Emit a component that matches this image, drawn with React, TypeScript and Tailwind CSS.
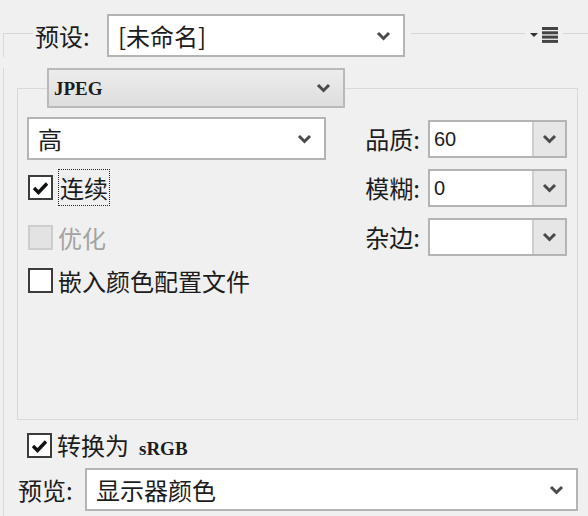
import type { ReactNode } from "react";

const LINE = "border-[#d9d9d9]";

function Chevron() {
  return (
    <svg width="15" height="10" viewBox="0 0 15 10" aria-hidden>
      <polyline
        points="2,2 7.5,7.5 13,2"
        fill="none"
        stroke="#4a4a4a"
        strokeWidth="3"
      />
    </svg>
  );
}

function MenuIcon() {
  return (
    <svg width="28" height="16" viewBox="0 0 28 16" aria-hidden>
      <polygon points="0,6 8,6 4,10" fill="#333" />
      {[0, 4.3, 8.6, 12.9].map((y) => (
        <rect key={y} x="12" y={y} width="16" height="3" fill="#444" />
      ))}
    </svg>
  );
}

function Select({
  children,
  className = "",
}: {
  children: ReactNode;
  className?: string;
}) {
  return (
    <div
      className={`flex items-center justify-between border-2 border-[#b4b4b4] bg-white pl-[9px] pr-[12px] ${className}`}
    >
      <span>{children}</span>
      <Chevron />
    </div>
  );
}

function Spin({ label, value }: { label: string; value: string }) {
  return (
    <div className="flex h-[38px] items-center">
      <span className="text-[24px] leading-none">{label}:</span>
      <div className="ml-[8px] flex h-full w-[139px] border-2 border-[#b4b4b4] bg-white">
        <span className="flex-1 self-center pl-[4px] font-['Liberation_Sans',sans-serif] text-[20px] leading-none">
          {value}
        </span>
        <div className="flex w-[33px] items-center justify-center border-l-2 border-[#cfcfcf] bg-[#e6e6e6]">
          <Chevron />
        </div>
      </div>
    </div>
  );
}

function Check({
  checked,
  disabled,
  children,
  className = "",
}: {
  checked?: boolean;
  disabled?: boolean;
  children: ReactNode;
  className?: string;
}) {
  return (
    <div className={`flex h-[25px] items-center ${className}`}>
      <span
        className={`flex size-[25px] shrink-0 items-center justify-center border-2 ${
          disabled
            ? "border-[#cdcdcd] bg-[#e3e3e3]"
            : "border-[#3c3c3c] bg-white"
        }`}
      >
        {checked && (
          <svg width="17" height="14" viewBox="0 0 17 14" aria-hidden>
            <polyline
              points="2,7 6.5,11.5 15,2.5"
              fill="none"
              stroke="#111"
              strokeWidth="3.4"
            />
          </svg>
        )}
      </span>
      <span
        className={`ml-[5px] text-[24px] leading-none ${
          disabled ? "text-[#a3a3a3]" : "text-[#1c1c1c]"
        }`}
      >
        {children}
      </span>
    </div>
  );
}

export default function App() {
  return (
    <div className="h-[516px] w-[588px] overflow-hidden bg-[#f0f0f0] pt-[14px] font-['Noto_Sans_CJK_SC',sans-serif] text-[#1c1c1c]">
      {/* preset header on the outer group line */}
      <div className="flex h-[43px]">
        <div className={`ml-[3px] mt-[19px] w-[30px] border-l border-t ${LINE}`} />
        <span className="ml-[2px] w-[72px] self-center text-[24px] leading-none">
          预设:
        </span>
        <Select className="w-[298px] text-[24px] leading-none">[未命名]</Select>
        <div className={`ml-[6px] mt-[19px] w-[114px] border-t ${LINE}`} />
        <div className="mx-[5px] flex items-center pb-[1px]">
          <MenuIcon />
        </div>
        <div className={`mt-[19px] flex-1 border-t ${LINE}`} />
      </div>

      <div className={`ml-[3px] h-[459px] border-l ${LINE}`}>
        {/* format group */}
        <div className="ml-[13px] mr-[10px] mt-[11px]">
          <div className="flex h-[40px]">
            <div className={`mt-[20px] w-[30px] border-l border-t ${LINE}`} />
            <div className="flex w-[298px] items-center justify-between border-2 border-[#b9b9b9] bg-gradient-to-b from-[#ececec] to-[#dedede] pl-[5px] pr-[12px]">
              <span className="font-['Liberation_Serif',serif] text-[19px] font-bold leading-none">
                JPEG
              </span>
              <Chevron />
            </div>
            <div className={`mt-[20px] flex-1 border-r border-t ${LINE}`} />
          </div>

          <div className={`flex h-[312px] border-b border-l border-r ${LINE} pl-[9px] pr-[10px] pt-[9px]`}>
            <div className="flex w-[299px] flex-col">
              <Select className="h-[43px] text-[24px] leading-none">高</Select>
              <Check checked className="ml-[1px] mt-[15px]">
                <span className="border border-dotted border-[#222] px-[1px]">连续</span>
              </Check>
              <Check disabled className="ml-[1px] mt-[25px]">
                优化
              </Check>
              <Check className="ml-[1px] mt-[18px]">嵌入颜色配置文件</Check>
            </div>
            <div className="flex flex-1 flex-col items-end gap-[11px] pt-[3px]">
              <Spin label="品质" value="60" />
              <Spin label="模糊" value="0" />
              <Spin label="杂边" value="" />
            </div>
          </div>
        </div>

        <Check checked className="ml-[23px] mt-[13px]">
          转换为
          <span className="ml-[10px] font-['Liberation_Serif',serif] text-[19px] font-bold">
            sRGB
          </span>
        </Check>

        <div className="mt-[10px] flex h-[43px] items-center">
          <span className="ml-[14px] w-[67px] text-[24px] leading-none">预览:</span>
          <Select className="h-full w-[493px] text-[24px] leading-none">显示器颜色</Select>
        </div>
      </div>
    </div>
  );
}
